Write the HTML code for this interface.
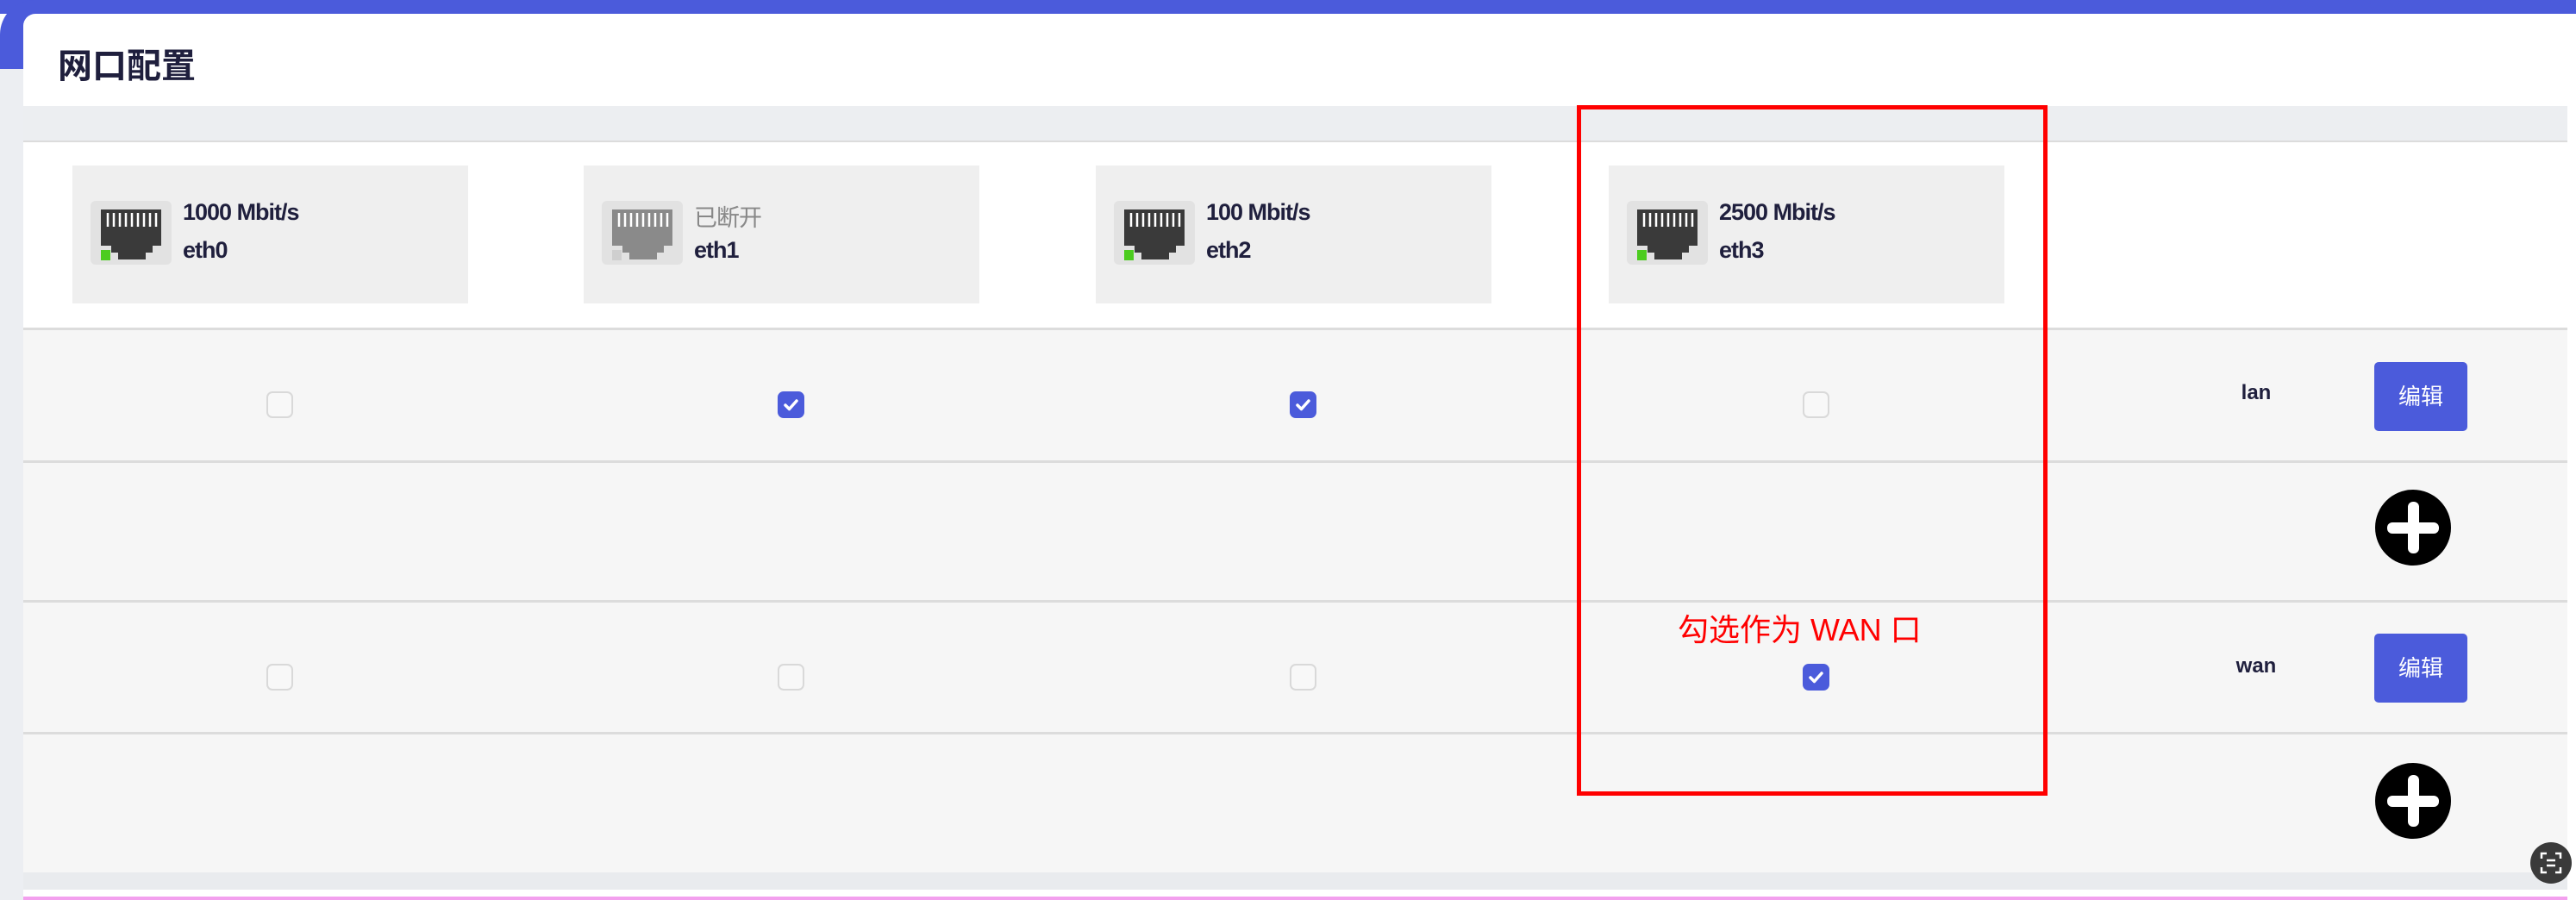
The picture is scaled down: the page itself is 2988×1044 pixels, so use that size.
<!DOCTYPE html>
<html><head><meta charset="utf-8"><style>
*{margin:0;padding:0;box-sizing:border-box}
body{width:2988px;height:1044px;overflow:hidden;background:#fff;position:relative;font-family:"Liberation Sans","Noto Sans CJK SC",sans-serif;color:#1f1f3d}
.a{position:absolute}
.cb{position:absolute;width:31px;height:31px;border:2px solid #d9d9d9;border-radius:7px;background:#f8f8f8}
.cb.on{background:#4b5bdb;border-color:#4b5bdb}
.box{position:absolute;top:192px;width:459px;height:160px;background:#efefef}
.t1{position:absolute;left:128px;top:39px;font-size:27px;font-weight:bold;letter-spacing:-1px}
.t2{position:absolute;left:128px;top:83px;font-size:27px;font-weight:bold;letter-spacing:-1px}
.ic{position:absolute;left:21px;top:41px}
.btn{position:absolute;left:2754px;width:108px;height:80px;background:#4b5bdb;border-radius:5px;color:#fff;font-size:26px;text-align:center;line-height:80px}
.lbl{position:absolute;width:80px;text-align:center;left:2577px;font-size:24px;font-weight:bold}
.plus{position:absolute;left:2755px;width:88px;height:88px;border-radius:50%;background:#000}
.plus:before{content:"";position:absolute;left:14px;top:38px;width:60px;height:13px;background:#fff;border-radius:6px}
.plus:after{content:"";position:absolute;left:38px;top:14px;width:13px;height:60px;background:#fff;border-radius:6px}
</style></head><body>
<div class="a" style="left:0;top:0;width:2988px;height:16px;background:#4b5bdb"></div>
<div class="a" style="left:0;top:0;width:60px;height:80px;background:#4b5bdb;border-radius:40px 0 0 0"></div>
<div class="a" style="left:0;top:80px;width:27px;height:964px;background:#eceef2"></div>
<div class="a" style="left:2978px;top:16px;width:10px;height:1028px;background:#fff"></div>
<div class="a" style="left:27px;top:16px;width:2951px;height:107px;background:#fff;border-radius:14px 14px 0 0"></div>
<div class="a" style="left:67px;top:44px;font-size:40px;font-weight:bold;color:#1f1f3d">网口配置</div>
<div class="a" style="left:27px;top:123px;width:2951px;height:42px;background:#eceef1"></div>
<div class="a" style="left:27px;top:163px;width:2951px;height:2px;background:#dcdcdc"></div>
<div class="a" style="left:27px;top:165px;width:2951px;height:215px;background:#fff"></div>

<svg width="0" height="0" style="position:absolute"><defs>
<g id="rj"><rect x="0" y="0" width="94" height="74" rx="6" fill="#e2e2e2"/>
<path d="M12 10H82V52H72V60H64V68H32V60H24V52H12Z" fill="currentColor"/>
<g stroke="#fff" stroke-width="2.5"><line x1="20" y1="14" x2="20" y2="30"/><line x1="27" y1="14" x2="27" y2="30"/><line x1="34" y1="14" x2="34" y2="30"/><line x1="41" y1="14" x2="41" y2="30"/><line x1="48" y1="14" x2="48" y2="30"/><line x1="55" y1="14" x2="55" y2="30"/><line x1="62" y1="14" x2="62" y2="30"/><line x1="69" y1="14" x2="69" y2="30"/><line x1="76" y1="14" x2="76" y2="30"/></g>
</g></defs></svg>

<div class="box" style="left:84px"><svg class="ic" width="94" height="74" style="color:#3a3a3a"><use href="#rj"/><rect x="12" y="57" width="11" height="12" fill="#4ccc1f"/></svg><div class="t1">1000 Mbit/s</div><div class="t2">eth0</div></div>
<div class="box" style="left:677px"><svg class="ic" width="94" height="74" style="color:#8a8a8a"><use href="#rj"/><rect x="12" y="57" width="11" height="12" fill="#cfcfcf"/></svg><div class="t1" style="color:#888;font-weight:normal">已断开</div><div class="t2">eth1</div></div>
<div class="box" style="left:1271px"><svg class="ic" width="94" height="74" style="color:#3a3a3a"><use href="#rj"/><rect x="12" y="57" width="11" height="12" fill="#4ccc1f"/></svg><div class="t1">100 Mbit/s</div><div class="t2">eth2</div></div>
<div class="box" style="left:1866px"><svg class="ic" width="94" height="74" style="color:#3a3a3a"><use href="#rj"/><rect x="12" y="57" width="11" height="12" fill="#4ccc1f"/></svg><div class="t1">2500 Mbit/s</div><div class="t2">eth3</div></div>

<div class="a" style="left:27px;top:380px;width:2951px;height:632px;background:#f6f6f6"></div>
<div class="a" style="left:27px;top:380px;width:2951px;height:3px;background:#dcdcdc"></div>
<div class="a" style="left:27px;top:534px;width:2951px;height:3px;background:#dcdcdc"></div>
<div class="a" style="left:27px;top:696px;width:2951px;height:3px;background:#dcdcdc"></div>
<div class="a" style="left:27px;top:849px;width:2951px;height:3px;background:#dcdcdc"></div>
<div class="a" style="left:27px;top:1012px;width:2951px;height:20px;background:#e9ebee"></div>
<div class="a" style="left:27px;top:1040px;width:2951px;height:4px;background:#f3a0ee"></div>

<div class="cb" style="left:309px;top:454px"></div>
<div class="cb on" style="left:902px;top:454px"><svg width="27" height="27" viewBox="0 0 27 27"><path d="M7 14l4.5 4.5L20 9" stroke="#fff" stroke-width="3.5" fill="none" stroke-linecap="round" stroke-linejoin="round"/></svg></div>
<div class="cb on" style="left:1496px;top:454px"><svg width="27" height="27" viewBox="0 0 27 27"><path d="M7 14l4.5 4.5L20 9" stroke="#fff" stroke-width="3.5" fill="none" stroke-linecap="round" stroke-linejoin="round"/></svg></div>
<div class="cb" style="left:2091px;top:454px"></div>
<div class="lbl" style="top:442px">lan</div>
<div class="btn" style="top:420px">编辑</div>
<div class="plus" style="top:568px"></div>

<div class="cb" style="left:309px;top:770px"></div>
<div class="cb" style="left:902px;top:770px"></div>
<div class="cb" style="left:1496px;top:770px"></div>
<div class="cb on" style="left:2091px;top:770px"><svg width="27" height="27" viewBox="0 0 27 27"><path d="M7 14l4.5 4.5L20 9" stroke="#fff" stroke-width="3.5" fill="none" stroke-linecap="round" stroke-linejoin="round"/></svg></div>
<div class="lbl" style="top:759px">wan</div>
<div class="btn" style="top:735px">编辑</div>
<div class="plus" style="top:885px"></div>

<div class="a" style="left:1829px;top:122px;width:546px;height:801px;border:5px solid #f00"></div>
<div class="a" style="left:1946px;top:702px;font-size:36px;color:#f00;white-space:nowrap">勾选作为 WAN 口</div>

<div class="a" style="left:2935px;top:977px;width:48px;height:48px;border-radius:50%;background:#3a3a3a"></div>
<svg class="a" style="left:2945px;top:987px" width="28" height="28" viewBox="0 0 28 28" fill="none" stroke="#fff" stroke-width="2.5"><path d="M3 9V3h6M19 3h6v6M25 19v6h-6M9 25H3v-6M9 11h10M9 17h10"/></svg>
</body></html>
